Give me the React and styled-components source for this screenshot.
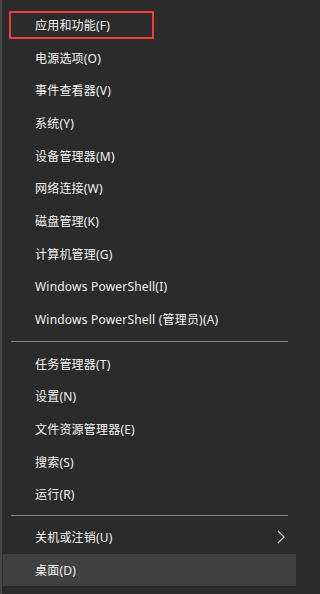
import styled, { createGlobalStyle } from "styled-components"

const GlobalStyle = createGlobalStyle`
html, body {
    margin: 0;
    padding: 0;
    background-color: #2b2b2b;
}
* {
    box-sizing: border-box;
}
`

const topItems = [
    "应用和功能(F)",
    "电源选项(O)",
    "事件查看器(V)",
    "系统(Y)",
    "设备管理器(M)",
    "网络连接(W)",
    "磁盘管理(K)",
    "计算机管理(G)",
    "Windows PowerShell(I)",
    "Windows PowerShell (管理员)(A)",
]

const middleItems = [
    "任务管理器(T)",
    "设置(N)",
    "文件资源管理器(E)",
    "搜索(S)",
    "运行(R)",
]

export default function App() {
    return (
        <>
            <GlobalStyle />
            <Menu>
                <Group>
                    {topItems.map((label, i) => (
                        <Item key={label}>
                            {i === 0 && <Marker />}
                            <Label>{label}</Label>
                        </Item>
                    ))}
                </Group>
                <Separator $space={12} />
                <Group>
                    {middleItems.map((label) => (
                        <Item key={label}>
                            <Label>{label}</Label>
                        </Item>
                    ))}
                </Group>
                <Separator $space={10} />
                <Group>
                    <Item>
                        <Label>关机或注销(U)</Label>
                        <Chevron viewBox="0 0 8 14">
                            <polyline points="1,1 7,7 1,13" />
                        </Chevron>
                    </Item>
                    <Item $hover>
                        <Label>桌面(D)</Label>
                    </Item>
                </Group>
            </Menu>
        </>
    )
}

const Menu = styled.div`
width: 296px;
height: 594px;
background-color: #2b2b2b;
border-left: 2px solid #474747;
padding-top: 8.5px;
display: flex;
flex-direction: column;
font-family: 'Noto Sans', 'Noto Sans CJK SC', sans-serif;
overflow: hidden;
`

const Group = styled.div`
display: flex;
flex-direction: column;
`

const Item = styled.div`
position: relative;
height: 32.7px;
margin-left: 1px;
padding-left: 32px;
padding-right: 11px;
display: flex;
align-items: center;
justify-content: space-between;
background-color: ${(p) => (p.$hover ? "#414141" : "transparent")};
`

const Label = styled.span`
font-size: 12px;
letter-spacing: 0.2px;
color: #f2f2f2;
white-space: nowrap;
`

const Marker = styled.span`
position: absolute;
left: 6px;
top: 2.5px;
width: 145px;
height: 28px;
border: 2px solid #f23b3b;
`

const Separator = styled.div`
height: ${(p) => p.$space}px;
display: flex;
align-items: center;
padding-left: 9px;
padding-right: 8px;

&::after {
    content: "";
    flex: 1;
    height: 1px;
    background-color: #858585;
}
`

const Chevron = styled.svg`
width: 8px;
height: 14px;
fill: none;
stroke: #d0d0d0;
stroke-width: 1.2;
`
